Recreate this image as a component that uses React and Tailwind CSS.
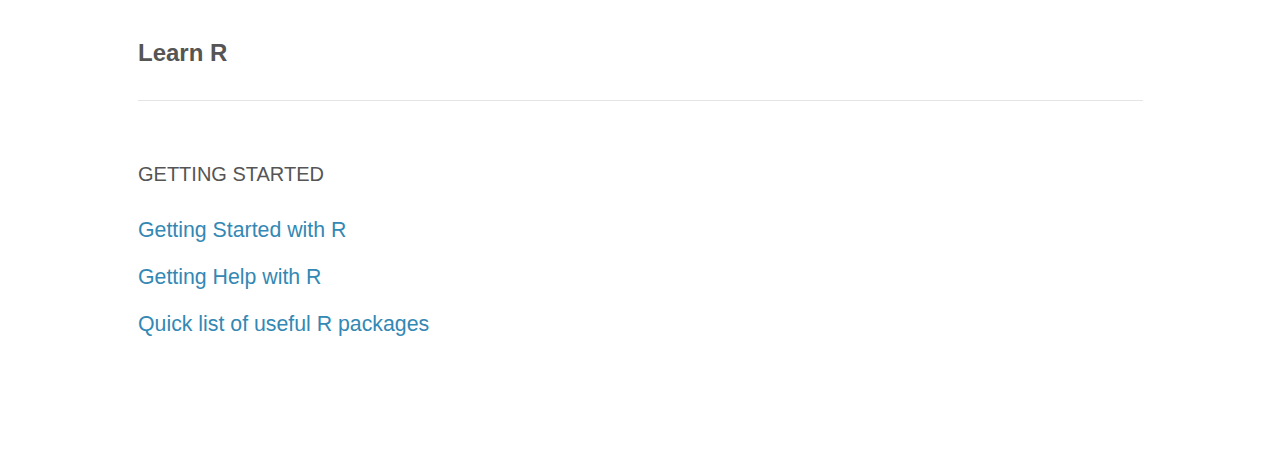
export default function App() {
  const links = [
    'Getting Started with R',
    'Getting Help with R',
    'Quick list of useful R packages',
  ];

  return (
    <div className="w-[1280px] h-[451px] bg-white font-['Liberation_Sans',Arial,sans-serif]">
      <div className="ml-[138px] w-[1005px] pt-[40px]">
        {/* Header */}
        <h1 className="text-[24px] leading-[26px] font-bold text-[#555555]">Learn R</h1>
        <div className="mt-[34px] h-px bg-[#e5e5e5]" />

        {/* Section */}
        <h2 className="mt-[61px] text-[20px] leading-[24px] text-[#555555]">GETTING STARTED</h2>
        <ul className="mt-[32px] flex flex-col gap-[23px]">
          {links.map((label) => (
            <li key={label} className="leading-[24px]">
              <a href="#" className="block text-[21.3px] leading-[24px] text-[#3388b4]">
                {label}
              </a>
            </li>
          ))}
        </ul>
      </div>
    </div>
  );
}
